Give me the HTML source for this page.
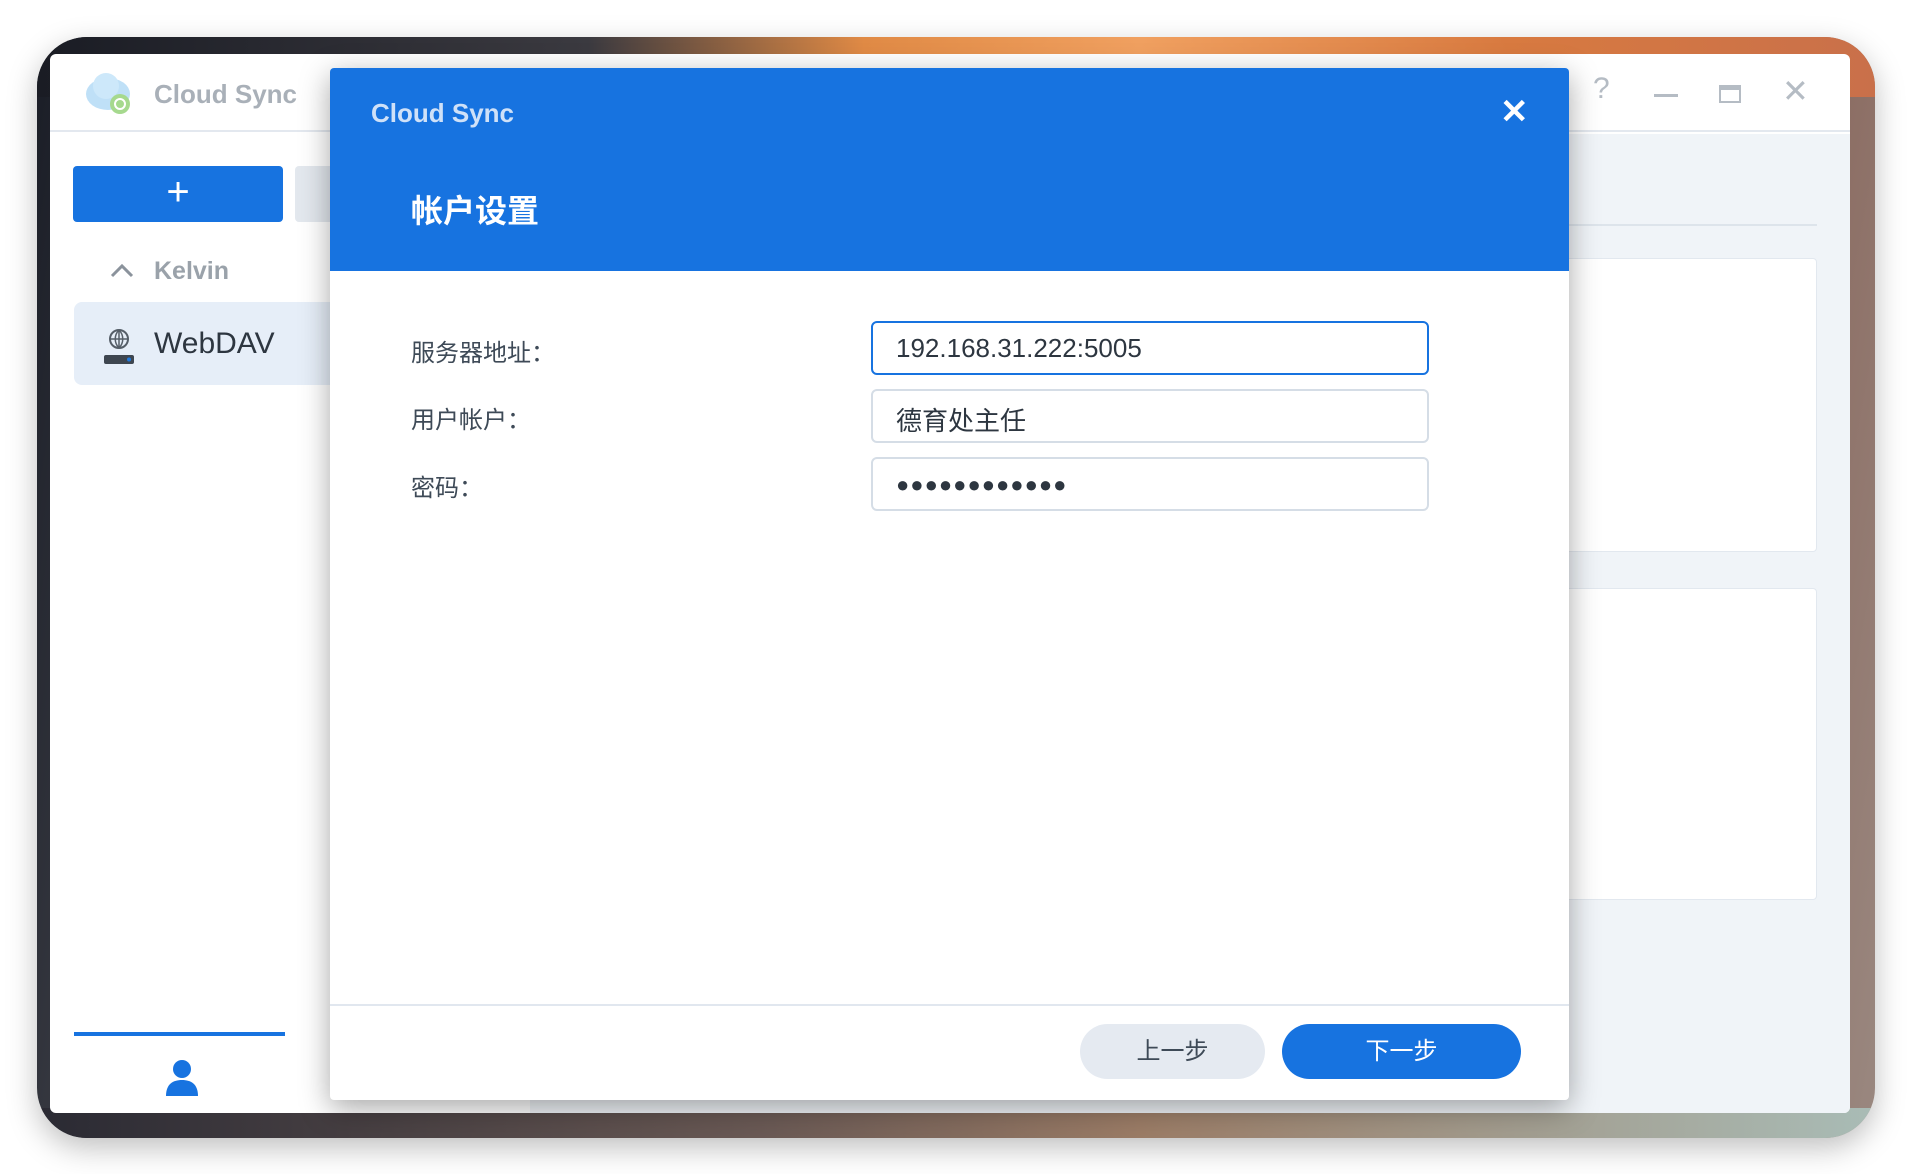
<!DOCTYPE html>
<html><head><meta charset="utf-8"><style>
*{margin:0;padding:0;box-sizing:border-box}
body{width:1912px;height:1174px;background:#fff;position:relative;overflow:hidden;font-family:"Liberation Sans","Noto Sans CJK SC",sans-serif}
.frame{position:absolute;left:37px;top:37px;width:1838px;height:1101px;border-radius:50px;overflow:hidden;
background:linear-gradient(100deg,#1a1d26 0%,#3a3c44 12%,#5b4c48 30%,#7a5a4c 50%,#9a6e55 70%,#8a6a60 88%,#9a8880 100%);box-shadow:0 10px 30px rgba(0,0,0,.25)}
.frame:before{content:"";position:absolute;left:0;right:0;top:0;height:60px;background:linear-gradient(90deg,#1a1c24 0%,#3b3a40 30%,#e08a45 45%,#f0a060 60%,#d87a40 80%,#c9704a 100%)}
.frame:after{content:"";position:absolute;left:0;right:0;bottom:0;height:30px;background:linear-gradient(90deg,#2a2a33,#6b5a55 40%,#9b7c66 60%,#a9bcb6)}
.app{position:absolute;left:50px;top:54px;width:1800px;height:1059px;background:#fff;border-radius:6px;overflow:hidden;z-index:1}
.tb{position:absolute;left:0;top:0;right:0;height:78px;border-bottom:2px solid #e3e8ef}
.content{position:absolute;left:480px;top:80px;right:0;bottom:0;background:#f0f4f8}
.panel{position:absolute;background:#fff;border:1px solid #e2e8ef;border-radius:4px}
.dlg{position:absolute;left:330px;top:68px;width:1239px;height:1032px;background:#fff;border-radius:4px;z-index:3;box-shadow:0 8px 30px rgba(0,0,0,.35);overflow:hidden}
.hd{height:203px;background:#1773e0;position:relative}
.lbl{position:absolute;left:81px;font-size:24px;color:#3e4a57}
.inp{position:absolute;left:541px;width:558px;height:54px;border:2px solid #d5dde6;border-radius:6px;font-size:26px;color:#2d3640;padding:10px 0 0 23px}
.btn{position:absolute;top:956px;height:55px;border-radius:28px;font-size:24px;text-align:center;line-height:55px}
</style></head><body>
<div class="frame"></div>
<div class="app">
 <div class="tb">
  <svg style="position:absolute;left:34px;top:16px" width="52" height="46" viewBox="0 0 52 46"><ellipse cx="24" cy="24" rx="22" ry="16" fill="#bfe0f7"/><circle cx="22" cy="16" r="13" fill="#cde8fa"/><circle cx="36" cy="34" r="10" fill="#a6d98e"/><circle cx="36" cy="34" r="5" fill="none" stroke="#fff" stroke-width="2"/></svg>
  <div style="position:absolute;left:104px;top:25px;font-size:26px;font-weight:bold;color:#a9b0b8">Cloud Sync</div>
  <div style="position:absolute;left:1543px;top:18px;font-size:30px;color:#b5bcc4">?</div>
  <div style="position:absolute;left:1604px;top:40px;width:24px;height:3px;background:#b5bcc4"></div>
  <div style="position:absolute;left:1669px;top:31px;width:22px;height:18px;border:2px solid #b5bcc4;border-top-width:5px"></div>
  <div style="position:absolute;left:1732px;top:18px;font-size:32px;color:#b5bcc4">✕</div>
 </div>
 <div style="position:absolute;left:23px;top:112px;width:210px;height:56px;background:#1773e0;border-radius:4px;color:#fff;font-size:40px;text-align:center;line-height:52px">+</div>
 <div style="position:absolute;left:245px;top:112px;width:100px;height:56px;background:#e3e8ee;border-radius:4px"></div>
 <svg style="position:absolute;left:60px;top:208px" width="24" height="16" viewBox="0 0 24 16"><path d="M2 14L12 4l10 10" fill="none" stroke="#8b939c" stroke-width="3"/></svg>
 <div style="position:absolute;left:104px;top:203px;font-size:25px;font-weight:bold;color:#9aa2aa">Kelvin</div>
 <div style="position:absolute;left:24px;top:248px;width:300px;height:83px;background:#e6eef8;border-radius:8px"></div>
 <svg style="position:absolute;left:53px;top:273px" width="32" height="38" viewBox="0 0 32 38"><circle cx="16" cy="12" r="9" fill="none" stroke="#555e68" stroke-width="2"/><path d="M7 12h18M16 3v18M16 3c-5 5-5 13 0 18M16 3c5 5 5 13 0 18" fill="none" stroke="#555e68" stroke-width="1.5"/><rect x="1" y="28" width="30" height="9" rx="2" fill="#3e4650"/><circle cx="26" cy="32.5" r="2" fill="#1f7ae0"/></svg>
 <div style="position:absolute;left:104px;top:273px;font-size:30px;color:#2d3640">WebDAV</div>
 <div style="position:absolute;left:24px;top:978px;width:211px;height:4px;background:#1773e0"></div>
 <svg style="position:absolute;left:114px;top:1004px" width="36" height="38" viewBox="0 0 36 38"><circle cx="18" cy="11" r="9" fill="#1773e0"/><path d="M2 38c0-12 7-16 16-16s16 4 16 16z" fill="#1773e0"/></svg>
 <div class="content">
  <div style="position:absolute;left:0;right:33px;top:90px;height:2px;background:#dde4eb"></div>
  <div class="panel" style="left:0;right:33px;top:124px;height:294px"></div>
  <div class="panel" style="left:0;right:33px;top:454px;height:312px"></div>
 </div>
</div>
<div class="dlg">
 <div class="hd">
  <div style="position:absolute;left:41px;top:30px;font-size:26px;font-weight:bold;color:#cfe1f8">Cloud Sync</div>
  <div style="position:absolute;left:1170px;top:24px;font-size:34px;color:#fff;font-weight:bold">✕</div>
  <div style="position:absolute;left:81px;top:118px;font-size:32px;font-weight:bold;color:#fff">帐户设置</div>
 </div>
 <div class="lbl" style="top:265px">服务器地址：</div>
 <div class="lbl" style="top:332px">用户帐户：</div>
 <div class="lbl" style="top:400px">密码：</div>
 <div class="inp" style="top:253px;border-color:#1773e0">192.168.31.222:5005</div>
 <div class="inp" style="top:321px">德育处主任</div>
 <div class="inp" style="top:389px;font-size:22px;letter-spacing:1px;padding-top:13px">●●●●●●●●●●●●</div>
 <div style="position:absolute;left:0;right:0;top:936px;height:2px;background:#e1e7ef"></div>
 <div class="btn" style="left:750px;width:185px;background:#e5eaf1;color:#3e4a57">上一步</div>
 <div class="btn" style="left:952px;width:239px;background:#1773e0;color:#fff">下一步</div>
</div>
</body></html>
